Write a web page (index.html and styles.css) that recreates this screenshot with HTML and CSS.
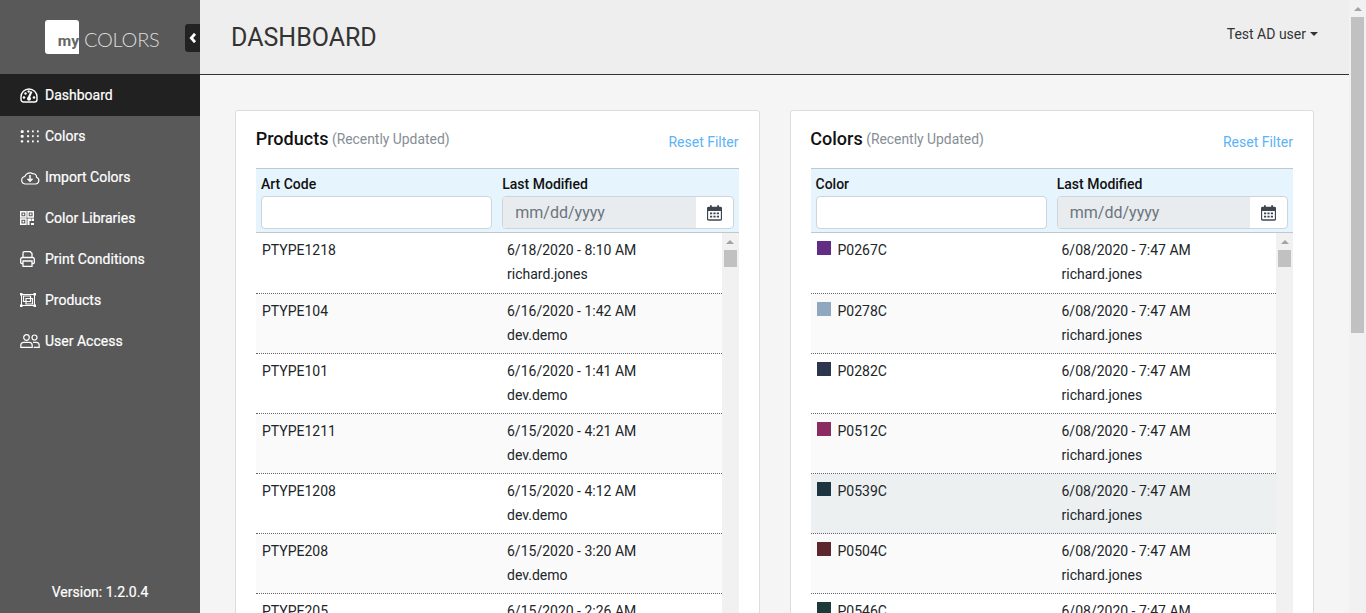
FILE: index.html
```html
<!DOCTYPE html>
<html lang="en">
<head>
<meta charset="utf-8">
<title>myColors Dashboard</title>
<link rel="stylesheet" href="styles.css">
</head>
<body>
<svg class="defs" width="0" height="0" aria-hidden="true">
  <symbol id="cal" viewBox="0 0 15 16">
    <path d="M1.500 2.500h12a1 1 0 0 1 1 1v10.500a1 1 0 0 1-1 1h-12a1 1 0 0 1-1-1V3.500a1 1 0 0 1 1-1z" fill="none" stroke="#3f4550" stroke-width="1.300"/>
    <path d="M.5 3.500a1 1 0 0 1 1-1h12a1 1 0 0 1 1 1V6H.5z" fill="#3f4550"/>
    <path d="M3 .3h1.800V3H3zM10.200 .3H12V3h-1.800z" fill="#3f4550"/>
    <path d="M3 7.500h2.200v1.800H3zM6.400 7.500h2.200v1.800H6.400zM9.800 7.500H12v1.800H9.800zM3 10.800h2.200v1.800H3zM6.400 10.800h2.200v1.800H6.400zM9.800 10.800H12v1.800H9.800z" fill="#3f4550"/>
  </symbol>
</svg>
<div class="page">
  <aside class="sidebar">
    <div class="brand">
      <div class="logo-box"><span class="logo-my">my</span></div>
      <span class="logo-text">COLORS</span>
      <button class="collapse" type="button" aria-label="Collapse">
        <svg width="8" height="10" viewBox="0 0 8 10"><path d="M6 .8 2.300 5 6 9.200" fill="none" stroke="#fff" stroke-width="2.800"/></svg>
      </button>
    </div>
    <nav class="nav">
      <a class="nav-item active">
        <svg class="nav-icon i-gauge" viewBox="0 0 18 15"><path d="M3.500 14h11A2.500 2.500 0 0 0 17 11.500V9a8 8 0 0 0-16 0v2.500A2.500 2.500 0 0 0 3.500 14z" fill="none" stroke="#fff" stroke-width="1.400"/><path d="M8.600 10 11.500 3.500" stroke="#fff" stroke-width="2"/><circle cx="9" cy="10.800" r="2" fill="#fff"/><circle cx="4" cy="9.500" r="1.300" fill="#fff"/><circle cx="14" cy="9.500" r="1.300" fill="#fff"/><circle cx="5.500" cy="5.500" r="1.200" fill="#fff"/><circle cx="8.700" cy="3.500" r="1.200" fill="#fff"/></svg>
        <span>Dashboard</span>
      </a>
      <a class="nav-item">
        <svg class="nav-icon i-dots" viewBox="0 0 20 13"><g fill="#fff"><rect x=".7" y=".2" width="3" height="2.800" rx="1"/><rect x=".7" y="5" width="3" height="2.800" rx="1"/><rect x=".7" y="10.200" width="2.600" height="2.400" rx="1"/><rect x="7" y=".2" width="2.200" height="2.200" rx="1"/><rect x="7" y="5" width="2.200" height="2.200" rx="1"/><rect x="7" y="10.200" width="2.200" height="2.200" rx="1"/><rect x="12" y=".2" width="1.800" height="2.200" rx=".9"/><rect x="12" y="5" width="1.800" height="2.200" rx=".9"/><rect x="12" y="10.200" width="1.800" height="2.200" rx=".9"/><rect x="17" y=".2" width="1.800" height="2.200" rx=".9"/><rect x="17" y="5" width="1.800" height="2.200" rx=".9"/><rect x="17" y="10.200" width="1.800" height="2.200" rx=".9"/></g></svg>
        <span>Colors</span>
      </a>
      <a class="nav-item">
        <svg class="nav-icon i-cloud" viewBox="0 0 20 15"><path d="M5 14h10.500a3.500 3.500 0 0 0 1-6.800A3 3 0 0 0 13 3.800 5.500 5.500 0 0 0 4.800 6.500 3.800 3.800 0 0 0 5 14z" fill="none" stroke="#fff" stroke-width="1.200"/><path d="M10 5v6M7.500 8.700 10 11.200l2.500-2.500" fill="none" stroke="#fff" stroke-width="1.500"/></svg>
        <span>Import Colors</span>
      </a>
      <a class="nav-item">
        <svg class="nav-icon i-lib" viewBox="0 0 14 14"><path d="M.7.7h5.300v5.300H.7zM8 .7h5.300v5.300H8zM.7 8h5.300v5.300H.7z" fill="none" stroke="#fff" stroke-width="1.400"/><path d="M2.500 2.500h1.700v1.700H2.500zM9.800 2.500h1.700v1.700H9.800zM2.500 9.800h1.700v1.700H2.500zM7.500 7.500H11V10H9.500v4h-2zM11.500 7.500H14V10h-2.500zM11 12h3v2h-3z" fill="#fff"/></svg>
        <span>Color Libraries</span>
      </a>
      <a class="nav-item">
        <svg class="nav-icon i-print" viewBox="0 0 15 16"><path d="M3 6.500V2a1.300 1.300 0 0 1 1.300-1.300h6L12 2.500v4M3 12.500H1.800A1 1 0 0 1 .7 11.500V8a1.500 1.500 0 0 1 1.500-1.500h10.600A1.500 1.500 0 0 1 14.300 8v3.500a1 1 0 0 1-1 1H12M3 10h9v5.300H3z" fill="none" stroke="#fff" stroke-width="1.300"/></svg>
        <span>Print Conditions</span>
      </a>
      <a class="nav-item">
        <svg class="nav-icon i-prod" viewBox="0 0 16 14"><path d="M1.500 1.500h13v11h-13z" fill="none" stroke="#fff" stroke-width="1"/><path d="M3.500 3h7v5.500h-7zM6 5.500h6.500V11H6z" fill="none" stroke="#fff" stroke-width="1.200"/><path d="M0 0h2.500v2.500H0zM13.500 0H16v2.500h-2.500zM0 11.500h2.500V14H0zM13.500 11.500H16V14h-2.500z" fill="#fff"/></svg>
        <span>Products</span>
      </a>
      <a class="nav-item">
        <svg class="nav-icon i-users" viewBox="0 0 20 14"><circle cx="6.500" cy="3.500" r="2.800" fill="none" stroke="#fff" stroke-width="1.200"/><circle cx="14.500" cy="3.500" r="2.500" fill="none" stroke="#fff" stroke-width="1.200"/><path d="M.8 13.300v-2a3 3 0 0 1 3-3h5.400a3 3 0 0 1 3 3v2zM13 8.300h3.200a3 3 0 0 1 3 3v2h-5.500" fill="none" stroke="#fff" stroke-width="1.200"/></svg>
        <span>User Access</span>
      </a>
    </nav>
    <div class="version">Version: 1.2.0.4</div>
  </aside>

  <div class="content">
    <header class="topbar">
      <h1 class="page-title">DASHBOARD</h1>
      <div class="user">Test AD user<span class="caret"></span></div>
    </header>
    <main class="main">
      <section class="card">
        <div class="card-head">
          <h2 class="card-title">Products <small class="card-sub">(Recently Updated)</small></h2>
          <a class="reset">Reset Filter</a>
        </div>
        <div class="table-head">
          <div class="th"><label class="th-label">Art Code</label><input class="text-input" type="text"></div>
          <div class="th"><label class="th-label">Last Modified</label>
            <div class="date-input"><span class="date-text">mm/dd/yyyy</span><span class="date-btn"><svg class="cal"><use href="#cal"/></svg></span></div>
          </div>
        </div>
        <div class="table-body">
          <div class="rows">
            <div class="row"><div class="cell code">PTYPE1218</div><div class="cell"><div>6/18/2020 - 8:10 AM</div><div class="by">richard.jones</div></div></div>
            <div class="row"><div class="cell code">PTYPE104</div><div class="cell"><div>6/16/2020 - 1:42 AM</div><div class="by">dev.demo</div></div></div>
            <div class="row"><div class="cell code">PTYPE101</div><div class="cell"><div>6/16/2020 - 1:41 AM</div><div class="by">dev.demo</div></div></div>
            <div class="row"><div class="cell code">PTYPE1211</div><div class="cell"><div>6/15/2020 - 4:21 AM</div><div class="by">dev.demo</div></div></div>
            <div class="row"><div class="cell code">PTYPE1208</div><div class="cell"><div>6/15/2020 - 4:12 AM</div><div class="by">dev.demo</div></div></div>
            <div class="row"><div class="cell code">PTYPE208</div><div class="cell"><div>6/15/2020 - 3:20 AM</div><div class="by">dev.demo</div></div></div>
            <div class="row"><div class="cell code">PTYPE205</div><div class="cell"><div>6/15/2020 - 2:26 AM</div><div class="by">dev.demo</div></div></div>
          </div>
          <div class="mini-scroll"><span class="arrow"></span><span class="mini-thumb"></span></div>
        </div>
      </section>

      <section class="card">
        <div class="card-head">
          <h2 class="card-title">Colors <small class="card-sub">(Recently Updated)</small></h2>
          <a class="reset">Reset Filter</a>
        </div>
        <div class="table-head">
          <div class="th"><label class="th-label">Color</label><input class="text-input" type="text"></div>
          <div class="th"><label class="th-label">Last Modified</label>
            <div class="date-input"><span class="date-text">mm/dd/yyyy</span><span class="date-btn"><svg class="cal"><use href="#cal"/></svg></span></div>
          </div>
        </div>
        <div class="table-body">
          <div class="rows">
            <div class="row"><div class="cell color"><span class="swatch s1"></span>P0267C</div><div class="cell"><div>6/08/2020 - 7:47 AM</div><div class="by">richard.jones</div></div></div>
            <div class="row"><div class="cell color"><span class="swatch s2"></span>P0278C</div><div class="cell"><div>6/08/2020 - 7:47 AM</div><div class="by">richard.jones</div></div></div>
            <div class="row"><div class="cell color"><span class="swatch s3"></span>P0282C</div><div class="cell"><div>6/08/2020 - 7:47 AM</div><div class="by">richard.jones</div></div></div>
            <div class="row"><div class="cell color"><span class="swatch s4"></span>P0512C</div><div class="cell"><div>6/08/2020 - 7:47 AM</div><div class="by">richard.jones</div></div></div>
            <div class="row hover"><div class="cell color"><span class="swatch s5"></span>P0539C</div><div class="cell"><div>6/08/2020 - 7:47 AM</div><div class="by">richard.jones</div></div></div>
            <div class="row"><div class="cell color"><span class="swatch s6"></span>P0504C</div><div class="cell"><div>6/08/2020 - 7:47 AM</div><div class="by">richard.jones</div></div></div>
            <div class="row"><div class="cell color"><span class="swatch s7"></span>P0546C</div><div class="cell"><div>6/08/2020 - 7:47 AM</div><div class="by">richard.jones</div></div></div>
          </div>
          <div class="mini-scroll"><span class="arrow"></span><span class="mini-thumb"></span></div>
        </div>
      </section>
    </main>
  </div>

  <div class="page-scroll"><span class="arrow"></span><span class="page-thumb"></span></div>
</div>
</body>
</html>
```
FILE: styles.css
```css
* { box-sizing: border-box; }
html, body { margin: 0; height: 100%; overflow: hidden; }
body { font-family: Roboto, "Liberation Sans", sans-serif; font-size: 14px; color: #212529; }
.defs { position: absolute; }
.page { display: flex; height: 613px; overflow: hidden; }

/* Sidebar */
.sidebar { width: 200px; flex: none; background: #595959; color: #fff; display: flex; flex-direction: column; }
.brand { height: 74px; flex: none; display: flex; align-items: flex-start; padding: 20px 0 0 45px; position: relative; }
.logo-box { width: 34px; height: 34px; background: #fff; border-radius: 3px 3px 0 3px; display: flex; align-items: flex-end; justify-content: flex-end; }
.logo-my { font-size: 15.500px; font-weight: 700; color: #666; line-height: 16px; padding-bottom: 5px; }
.logo-text { font-family: Lato, sans-serif; font-weight: 300; font-size: 20px; line-height: 38px; color: #dcdcdc; margin-left: 5px; letter-spacing: -.25px; }
.collapse { position: absolute; right: 0; top: 24px; width: 15px; height: 28px; padding: 0; border: 0; background: #222; border-radius: 3px 0 0 3px; display: flex; align-items: center; justify-content: center; }
.nav { display: flex; flex-direction: column; }
.nav-item { display: flex; align-items: center; height: 41px; padding: 0 0 1px 20px; color: #fff; font-size: 14px; -webkit-text-stroke: .2px #fff; }
.nav-item.active { height: 42px; padding-bottom: 0; background: #212121; }
.nav-icon { flex: none; }
.i-gauge { width: 18px; height: 15px; margin-right: 7px; }
.i-dots { width: 20px; height: 13px; margin-right: 5px; }
.i-cloud { width: 20px; height: 15px; margin-right: 5px; }
.i-lib { width: 14px; height: 14px; margin-right: 11px; }
.i-print { width: 15px; height: 16px; margin-right: 10px; }
.i-prod { width: 16px; height: 14px; margin-right: 9px; }
.i-users { width: 20px; height: 14px; margin-right: 5px; }
.version { margin-top: auto; text-align: center; padding-bottom: 13px; line-height: 16px; -webkit-text-stroke: .2px #fff; }

/* Content */
.content { flex: 1; min-width: 0; display: flex; flex-direction: column; background: #f5f5f5; }
.topbar { height: 75px; flex: none; background: #eee; border-bottom: 1px solid #333; display: flex; justify-content: space-between; padding: 0 31px; }
.page-title { margin: 0; font-size: 25px; font-weight: 400; color: #333; line-height: 75px; }
.user { color: #333; font-size: 14px; line-height: 16px; padding-top: 26px; }
.caret { display: inline-block; margin-left: 4px; vertical-align: 3px; border-top: 4px solid #333; border-left: 4px solid transparent; border-right: 4px solid transparent; }
.main { flex: 1; min-height: 0; overflow: hidden; display: grid; grid-template-columns: 1fr 1fr; column-gap: 30px; padding: 35px 35px 0; }

/* Cards */
.card { background: #fff; border: 1px solid #ddd; border-radius: 3px 3px 0 0; padding: 0 20px; height: 600px; display: flex; flex-direction: column; }
.card-head { height: 57px; flex: none; display: flex; justify-content: space-between; align-items: flex-start; }
.card-title { margin: 17px 0 0 -.25px; font-size: 18px; font-weight: 500; line-height: 22px; color: #111; }
.card-sub { font-size: 13.900px; font-weight: 400; color: #868e96; margin-left: -1px; position: relative; top: -1px; }
.reset { margin-top: 23px; color: #5cb3f5; font-size: 14px; line-height: 16px; }
.table-head { display: grid; grid-template-columns: 1fr 1fr; height: 65px; flex: none; background: #e6f5fd; border-top: 1px solid #bfc8ce; border-bottom: 1px solid #bfc8ce; }
.th { padding: 7px 5px 0; display: flex; flex-direction: column; }
.th-label { font-weight: 500; color: #111; line-height: 16px; margin-bottom: 4px; }
.text-input { width: 100%; height: 33px; background: #fff; border: 1px solid #ced4da; border-radius: 4px; padding: 0 12px; margin: 0; }
.date-input { height: 33px; display: flex; border: 1px solid #ced4da; border-radius: 4px; overflow: hidden; background: #fff; }
.date-text { flex: 1; background: #e9ecef; color: #6c757d; font-size: 16px; line-height: 31px; padding-left: 12px; }
.date-btn { width: 37px; flex: none; display: flex; align-items: center; justify-content: center; }
.cal { width: 15px; height: 16px; }

/* Table body */
.table-body { flex: 1; min-height: 0; display: flex; overflow: hidden; }
.rows { flex: 1; min-width: 0; }
.row { display: grid; grid-template-columns: 245px 1fr; height: 60px; border-bottom: 1px dotted #666; }
.row:first-child { height: 61px; }
.row:nth-child(even) { background: #fafafa; }
.row.hover { background: #ecf0f1; }
.cell { padding: 9px 0 0 6px; line-height: 16px; color: #212529; }
.by { margin-top: 8px; }
.color { display: flex; align-items: flex-start; }
.swatch { width: 14px; height: 14px; margin: -1px 7px 0 0; flex: none; }
.s1 { background: #642d85; }
.s2 { background: #90a7c0; }
.s3 { background: #2b354e; }
.s4 { background: #8a2b62; }
.s5 { background: #1c3541; }
.s6 { background: #5c272d; }
.s7 { background: #1c3a3a; }

/* Fake scrollbars */
.mini-scroll { width: 17px; flex: none; background: #f1f1f1; display: flex; flex-direction: column; align-items: center; padding-top: 7px; }
.arrow { width: 0; height: 0; border-bottom: 4px solid #a3a3a3; border-left: 4px solid transparent; border-right: 4px solid transparent; }
.mini-thumb { width: 13px; height: 17px; background: #c1c1c1; margin-top: 6px; }
.page-scroll { width: 17px; flex: none; background: #f1f1f1; display: flex; flex-direction: column; align-items: center; padding-top: 7px; }
.page-thumb { width: 13px; height: 316px; background: #c1c1c1; margin-top: 6px; }
```
